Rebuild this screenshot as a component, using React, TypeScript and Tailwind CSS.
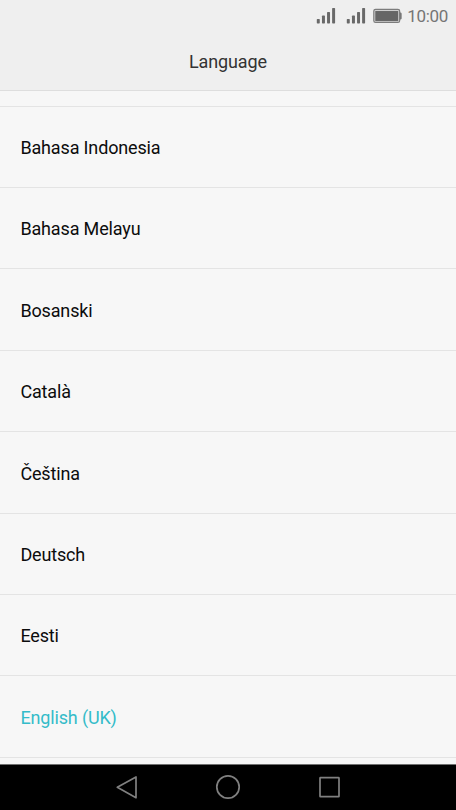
const languages = [
  'Bahasa Indonesia',
  'Bahasa Melayu',
  'Bosanski',
  'Català',
  'Čeština',
  'Deutsch',
  'Eesti',
  'English (UK)',
];

function Signal() {
  return (
    <svg className="h-4 w-5" viewBox="0 0 20 16" fill="#696969">
      <rect x="0.8" y="11" width="3" height="4.5" rx="0.7" />
      <rect x="6" y="7.5" width="3" height="8" rx="0.7" />
      <rect x="11.1" y="4" width="3" height="11.5" rx="0.7" />
      <rect x="16.2" y="0" width="3" height="15.5" rx="0.7" />
    </svg>
  );
}

function Battery() {
  return (
    <svg className="h-4 w-[29px]" viewBox="0 0 29 16">
      <rect x="0.8" y="1.3" width="26" height="13.2" rx="1.8" fill="#cfcfcf" stroke="#7c7c7c" strokeWidth="1.2" />
      <rect x="2.3" y="3" width="23" height="10" fill="#666" />
      <path d="M27 4.5h1q.8.3.8 1.2v4.6q0 .9-.8 1.2h-1z" fill="#777" />
    </svg>
  );
}

function StatusBar() {
  return (
    <div className="flex h-8 items-center pr-2 pl-[316px] text-[#757575]">
      <Signal />
      <div className="w-2.5" />
      <Signal />
      <div className="w-[7px]" />
      <Battery />
      <span className="ml-[5.6px] text-[17px] leading-8 tracking-[-0.3px] whitespace-nowrap">10:00</span>
    </div>
  );
}

function NavBar() {
  return (
    <nav className="flex h-[46px] shrink-0 justify-center border-t border-[#707070] bg-black">
      <svg className="h-[45px] w-[240px]" viewBox="0 0 240 45" fill="none" stroke="#808080" strokeWidth="1.7" strokeLinejoin="round">
        <path d="M9.3 22.3 28 12v20.7z" />
        <circle cx="120" cy="22" r="11.2" />
        <rect x="212" y="12.7" width="19" height="19" rx="0.5" />
      </svg>
    </nav>
  );
}

export default function App() {
  return (
    <div className="flex h-[810px] w-[456px] flex-col overflow-hidden bg-[#f7f7f7] font-[Roboto,sans-serif]">
      <header className="h-[91px] shrink-0 border-b border-[#dedede] bg-[#efefef]">
        <StatusBar />
        <h1 className="text-center text-[18px] leading-[59px] tracking-[-0.12px] text-[#333]">Language</h1>
      </header>
      <main className="min-h-0 flex-1 overflow-hidden">
        <div className="h-[15.6px] border-b border-[#e4e4e4]" />
        <ul>
          {languages.map((name) => (
            <li
              key={name}
              className={`flex h-[81.4px] items-center border-b border-[#e4e4e4] pt-[1.4px] pl-[20.4px] text-[18px] tracking-[-0.15px] ${
                name === 'English (UK)' ? 'text-[#34bcc9]' : 'text-[#0c0c0c]'
              }`}
            >
              {name}
            </li>
          ))}
        </ul>
      </main>
      <NavBar />
    </div>
  );
}
